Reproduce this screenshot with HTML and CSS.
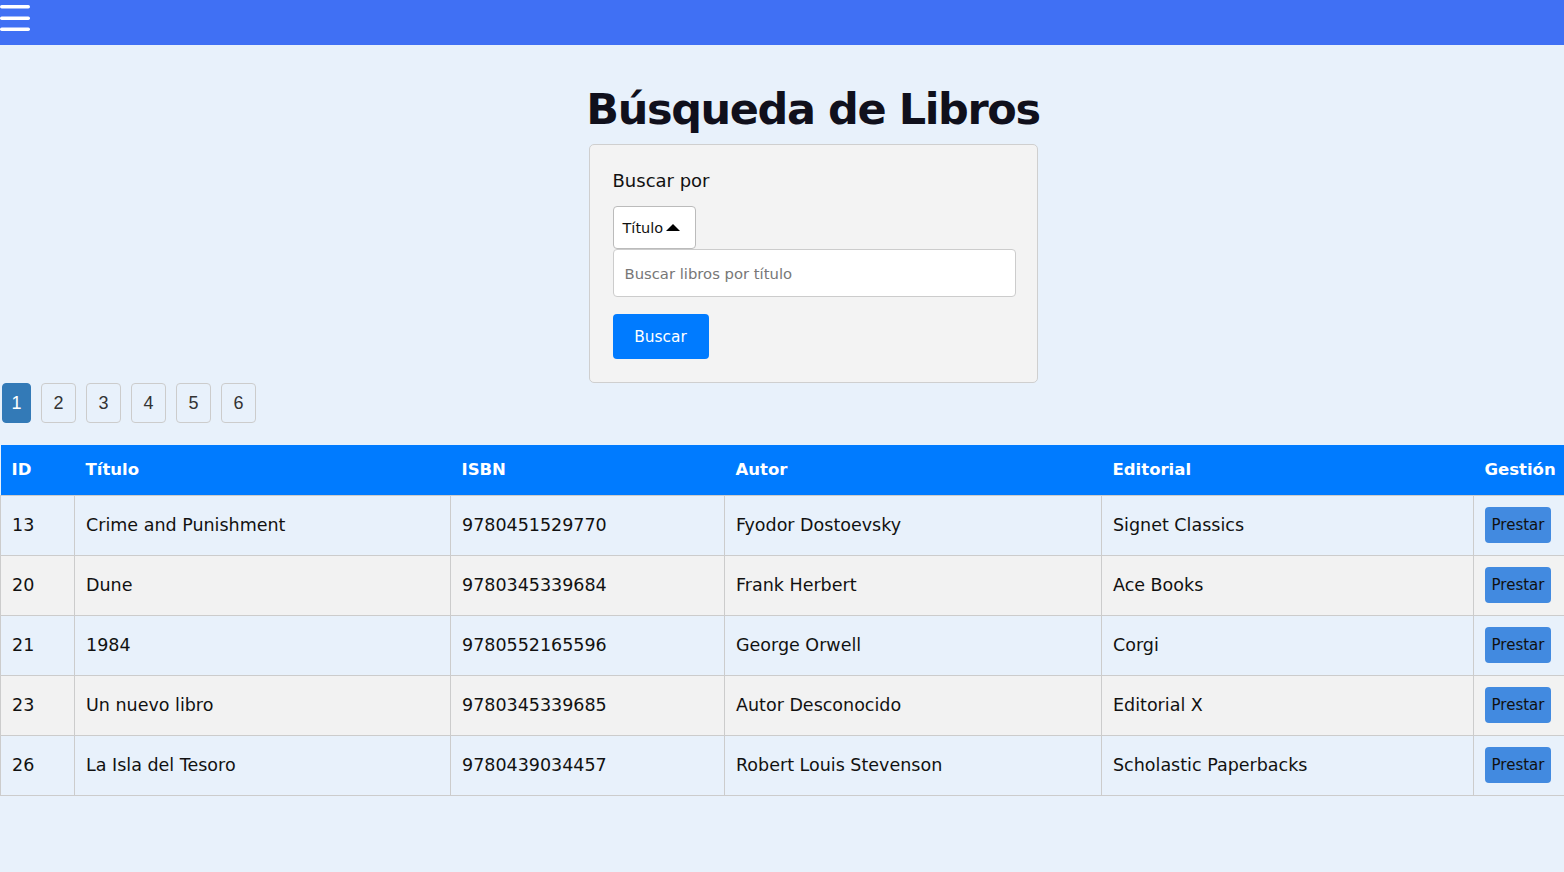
FILE: index.html
```html
<!DOCTYPE html>
<html lang="es">
<head>
<meta charset="utf-8">
<title>Búsqueda de Libros</title>
<link rel="stylesheet" href="styles.css">
</head>
<body>
<header class="topbar">
  <svg class="menu-icon" width="30" height="30" viewBox="0 0 30 30">
    <rect x="0" y="4" width="30" height="3.5" rx="1.7" fill="#fff"/>
    <rect x="0" y="15.5" width="30" height="3.5" rx="1.7" fill="#fff"/>
    <rect x="0" y="26.5" width="30" height="3.5" rx="1.7" fill="#fff"/>
  </svg>
</header>
<main>
  <div class="hero">
    <h1 class="title">Búsqueda de Libros</h1>
    <section class="search-box">
      <label class="search-label">Buscar por</label>
      <div class="select-btn">Título <span class="caret"></span></div>
      <input class="search-input" type="text" placeholder="Buscar libros por título">
      <button class="btn-search">Buscar</button>
    </section>
  </div>
  <nav class="pagination">
    <a class="page active">1</a>
    <a class="page">2</a>
    <a class="page">3</a>
    <a class="page">4</a>
    <a class="page">5</a>
    <a class="page">6</a>
  </nav>
  <table class="books">
    <colgroup>
      <col style="width:74px"><col style="width:376px"><col style="width:274px"><col style="width:377px"><col style="width:372px"><col style="width:91px">
    </colgroup>
    <thead>
      <tr><th>ID</th><th>Título</th><th>ISBN</th><th>Autor</th><th>Editorial</th><th>Gestión</th></tr>
    </thead>
    <tbody>
      <tr><td>13</td><td>Crime and Punishment</td><td>9780451529770</td><td>Fyodor Dostoevsky</td><td>Signet Classics</td><td><button class="btn-lend">Prestar</button></td></tr>
      <tr><td>20</td><td>Dune</td><td>9780345339684</td><td>Frank Herbert</td><td>Ace Books</td><td><button class="btn-lend">Prestar</button></td></tr>
      <tr><td>21</td><td>1984</td><td>9780552165596</td><td>George Orwell</td><td>Corgi</td><td><button class="btn-lend">Prestar</button></td></tr>
      <tr><td>23</td><td>Un nuevo libro</td><td>9780345339685</td><td>Autor Desconocido</td><td>Editorial X</td><td><button class="btn-lend">Prestar</button></td></tr>
      <tr><td>26</td><td>La Isla del Tesoro</td><td>9780439034457</td><td>Robert Louis Stevenson</td><td>Scholastic Paperbacks</td><td><button class="btn-lend">Prestar</button></td></tr>
    </tbody>
  </table>
</main>
</body>
</html>
```
FILE: styles.css
```css
* { box-sizing: border-box; }
html, body { margin: 0; padding: 0; }
body {
  background: #e8f1fb;
  font-family: "DejaVu Sans", "Noto Sans", sans-serif;
  color: #111;
  width: 1564px;
  height: 872px;
  overflow: hidden;
}
.topbar {
  height: 45px;
  background: #4070f4;
  display: flex;
  align-items: flex-start;
}
.menu-icon { display: block; margin-top: 1px; }
main { display: flex; flex-direction: column; }
.hero {
  display: flex;
  flex-direction: column;
  align-items: center;
  padding-left: 62px;
}
.title {
  margin: 38px 0 0 0;
  font-size: 43px;
  font-weight: 700;
  line-height: 52px;
  color: #10101c;
  letter-spacing: -1.4px;
}
.search-box {
  margin-top: 9px;
  width: 449px;
  height: 239px;
  background: #f3f3f3;
  border: 1px solid #cfcfcf;
  border-radius: 5px;
  padding: 24px 22px 0 23px;
  display: flex;
  flex-direction: column;
  align-items: flex-start;
}
.search-label { font-size: 18px; line-height: 24px; margin-bottom: 13px; }
.select-btn {
  height: 43px;
  width: 83px;
  background: #fff;
  border: 1px solid #bbb;
  border-radius: 4px;
  font-size: 14.5px;
  display: flex;
  align-items: center;
  padding-left: 9px;
  gap: 3px;
}
.caret {
  width: 0; height: 0;
  border-left: 7px solid transparent;
  border-right: 7px solid transparent;
  border-bottom: 7px solid #000;
}
.search-input {
  width: 403px;
  height: 48px;
  border: 1px solid #ccc;
  border-radius: 4px;
  padding: 0 11px;
  font-family: inherit;
  font-size: 14.8px;
  background: #fff;
}
.search-input::placeholder { color: #777; }
.btn-search {
  margin-top: 17px;
  width: 96px;
  height: 45px;
  background: #007bff;
  color: #fff;
  border: none;
  border-radius: 4px;
  font-family: inherit;
  font-size: 15.4px;
}
.pagination {
  display: flex;
  gap: 10px;
  margin-top: 0;
  padding-left: 2px;
}
.page {
  font-family: "Liberation Sans", Arial, sans-serif;
  font-size: 18px;
  height: 40px;
  width: 35px;
  border: 1px solid #ccc;
  border-radius: 4px;
  display: flex;
  align-items: center;
  justify-content: center;
  color: #333;
}
.page.active { background: #337ab7; border-color: #337ab7; color: #fff; width: 29px; }
.books {
  margin-top: 22px;
  width: 1564px;
  border-collapse: collapse;
  table-layout: fixed;
}
.books th {
  background: #007bff;
  color: #fff;
  text-align: left;
  font-size: 16.5px;
  font-weight: 700;
  height: 50px;
  padding: 0 11px;
}
.books td {
  height: 60px;
  padding: 0 11px;
  font-size: 17.5px;
  border: 1px solid #ccc;
  color: #111;
}
.books tbody tr:nth-child(odd) td { background: #e8f1fb; }
.books tbody tr:nth-child(even) td { background: #f2f2f2; }
.btn-lend {
  background: #428ae0;
  border: none;
  border-radius: 4px;
  color: #111;
  font-family: inherit;
  font-size: 15px;
  height: 36px;
  width: 66px;
  padding: 0;
}
```
